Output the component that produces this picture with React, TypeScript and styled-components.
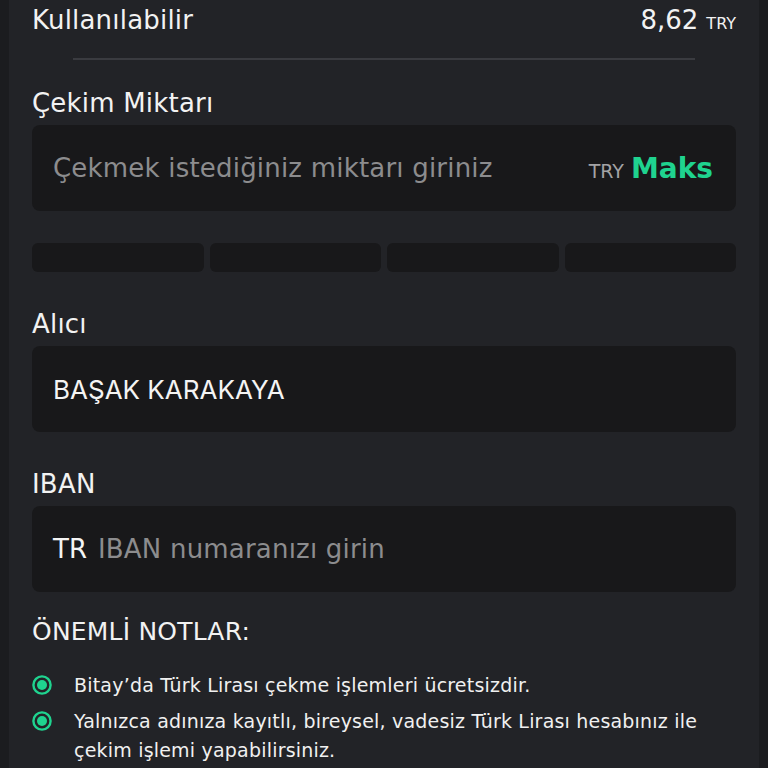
import React from "react";
import styled, { createGlobalStyle } from "styled-components";

const GREEN = "#1fd38f";

const GlobalStyle = createGlobalStyle`
  html, body {
    margin: 0;
    padding: 0;
    background: #1b1c1f;
  }
  * { box-sizing: border-box; }
`;

const Page = styled.div`
  width: 768px;
  height: 768px;
  overflow: hidden;
  background: #1b1c1f;
  padding: 0 9px;
  font-family: "DejaVu Sans", "Noto Sans", sans-serif;
  color: #f2f2f2;
`;

const Panel = styled.div`
  height: 100%;
  background: #222327;
  padding: 0 23px;
  display: flex;
  flex-direction: column;
`;

const BalanceRow = styled.div`
  height: 40px;
  display: flex;
  align-items: center;
  justify-content: space-between;
`;

const BalanceLabel = styled.span`
  font-size: 26px;
  letter-spacing: 0.2px;
`;

const BalanceValue = styled.span`
  font-size: 26px;
  display: flex;
  align-items: baseline;
  gap: 8px;
`;

const Unit = styled.span<{ $size?: number; $color?: string }>`
  font-size: ${({ $size }) => $size ?? 16}px;
  color: ${({ $color }) => $color ?? "#f2f2f2"};
`;

const Divider = styled.hr`
  border: none;
  height: 2px;
  background: #3a3b40;
  margin: 18px 41px 0;
`;

const Label = styled.div<{ $top: number }>`
  margin-top: ${({ $top }) => $top}px;
  height: 32px;
  line-height: 32px;
  font-size: 26px;
  letter-spacing: 0.2px;
`;

const Field = styled.div`
  margin-top: 6px;
  height: 86px;
  border-radius: 8px;
  background: #18181a;
  padding: 0 23px 0 21px;
  display: flex;
  align-items: center;
  gap: 11px;
`;

const Placeholder = styled.span`
  flex: 1;
  font-size: 26px;
  color: #8c8c8e;
  letter-spacing: 0.2px;
  white-space: nowrap;
`;

const Value = styled.span`
  font-family: Inter, "Noto Sans", sans-serif;
  font-size: 26px;
  color: #f4f4f4;
`;

const Prefix = styled.span`
  font-size: 26px;
  color: #f4f4f4;
`;

const Maks = styled.span`
  font-size: 28px;
  font-weight: 600;
  color: ${GREEN};
`;

const Suffix = styled.div`
  display: flex;
  align-items: baseline;
  gap: 7px;
`;

const QuickGrid = styled.div`
  margin-top: 32px;
  display: grid;
  grid-template-columns: repeat(4, 1fr);
  gap: 6px;
`;

const QuickButton = styled.div`
  height: 29px;
  border-radius: 6px;
  background: #18181a;
`;

const NotesTitle = styled.div`
  margin-top: 24px;
  height: 32px;
  line-height: 32px;
  font-size: 25px;
  letter-spacing: 0.2px;
`;

const NoteList = styled.ul`
  list-style: none;
  margin: 23px 0 0;
  padding: 0;
  display: flex;
  flex-direction: column;
  gap: 7px;
`;

const NoteItem = styled.li`
  display: flex;
  align-items: flex-start;
  gap: 21px;
  font-size: 19px;
  line-height: 29px;
  letter-spacing: 0.2px;
  color: #f0f0f0;
  padding-right: 30px;
`;

const Bullet = styled.svg`
  flex: none;
  width: 22px;
  height: 22px;
  margin-top: 3px;
  margin-left: -1px;
`;

const BulletIcon = () => (
  <Bullet viewBox="0 0 22 22">
    <circle cx="11" cy="11" r="8.6" fill="none" stroke={GREEN} strokeWidth="2.4" />
    <circle cx="11" cy="11" r="5" fill={GREEN} />
  </Bullet>
);

const notes = [
  "Bitay’da Türk Lirası çekme işlemleri ücretsizdir.",
  "Yalnızca adınıza kayıtlı, bireysel, vadesiz Türk Lirası hesabınız ile çekim işlemi yapabilirsiniz.",
];

export default function App() {
  return (
    <>
      <GlobalStyle />
      <Page>
        <Panel>
          <BalanceRow>
            <BalanceLabel>Kullanılabilir</BalanceLabel>
            <BalanceValue>
              8,62 <Unit>TRY</Unit>
            </BalanceValue>
          </BalanceRow>
          <Divider />

          <Label $top={27}>Çekim Miktarı</Label>
          <Field>
            <Placeholder>Çekmek istediğiniz miktarı giriniz</Placeholder>
            <Suffix>
              <Unit $size={19} $color="#a3a3a5">TRY</Unit>
              <Maks>Maks</Maks>
            </Suffix>
          </Field>

          <QuickGrid>
            <QuickButton />
            <QuickButton />
            <QuickButton />
            <QuickButton />
          </QuickGrid>

          <Label $top={36}>Alıcı</Label>
          <Field>
            <Value>BAŞAK KARAKAYA</Value>
          </Field>

          <Label $top={36}>IBAN</Label>
          <Field>
            <Prefix>TR</Prefix>
            <Placeholder>IBAN numaranızı girin</Placeholder>
          </Field>

          <NotesTitle>ÖNEMLİ NOTLAR:</NotesTitle>
          <NoteList>
            {notes.map((n) => (
              <NoteItem key={n}>
                <BulletIcon />
                <span>{n}</span>
              </NoteItem>
            ))}
          </NoteList>
        </Panel>
      </Page>
    </>
  );
}
